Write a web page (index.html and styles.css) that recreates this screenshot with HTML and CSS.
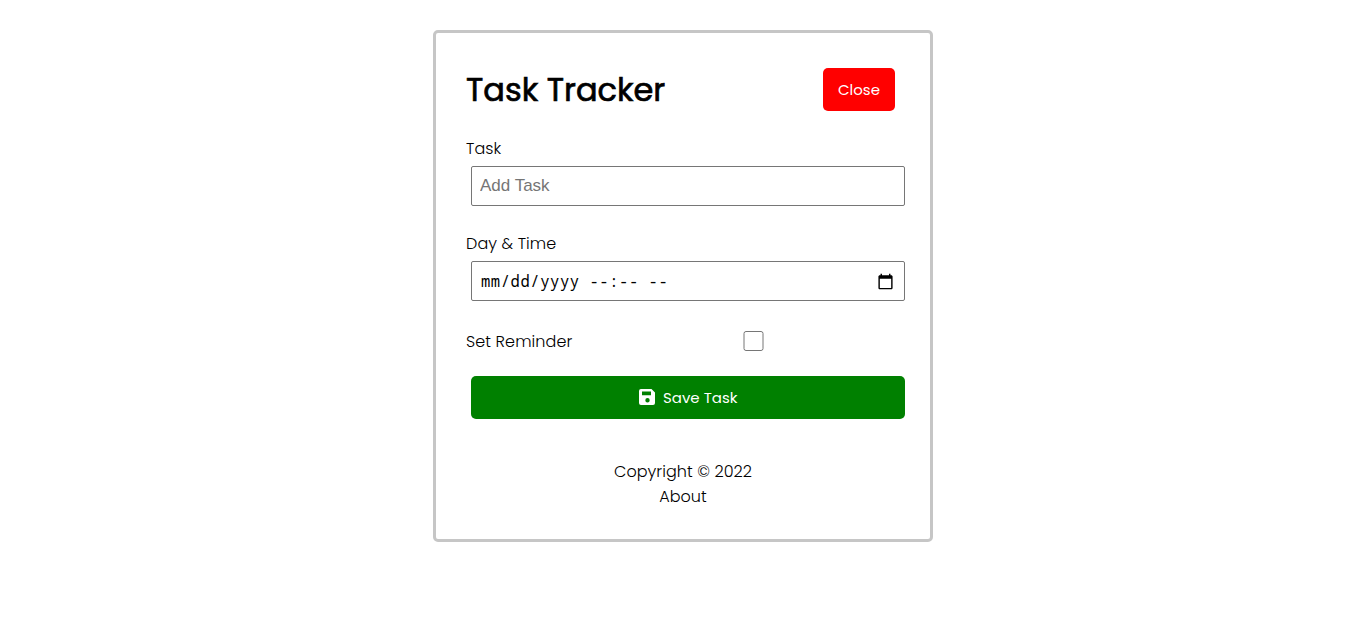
FILE: index.html
```html
<!DOCTYPE html>
<html lang="en">
<head>
<meta charset="utf-8">
<title>Task Tracker</title>
<link rel="stylesheet" href="styles.css">
</head>
<body>
<div class="container">
  <header class="header">
    <h1 class="title">Task Tracker</h1>
    <button class="btn btn-close">Close</button>
  </header>
  <form class="add-form">
    <div class="form-control">
      <label>Task</label>
      <input class="field" type="text" placeholder="Add Task">
    </div>
    <div class="form-control">
      <label>Day &amp; Time</label>
      <div class="field date">
        <span class="date-text">mm/dd/yyyy --:-- --</span>
        <svg class="calendar" viewBox="0 0 24 24"><path d="M20 3h-1V1h-2v2H7V1H5v2H4c-1.100 0-2 .9-2 2v16c0 1.100.9 2 2 2h16c1.100 0 2-.9 2-2V5c0-1.100-.9-2-2-2zm0 18H4V8h16v13z"/></svg>
      </div>
    </div>
    <div class="form-control check">
      <label>Set Reminder</label>
      <input class="checkbox" type="checkbox">
    </div>
    <button type="button" class="btn btn-block">
      <svg class="save" viewBox="0 0 16 16"><path fill-rule="evenodd" d="M2 0H12.500L16 3.500V14a2 2 0 0 1-2 2H2a2 2 0 0 1-2-2V2a2 2 0 0 1 2-2zM3 2.500v3.800h9V2.500zM8.500 9a2.200 2.200 0 1 0 0 4.400A2.200 2.200 0 0 0 8.500 9z"/></svg>
      <span>Save Task</span>
    </button>
  </form>
  <footer class="footer">
    <p>Copyright © 2022</p>
    <a>About</a>
  </footer>
</div>
</body>
</html>
```
FILE: styles.css
```css
* { box-sizing: border-box; margin: 0; padding: 0; }
body { font-family: Poppins, Lato, sans-serif; font-size: 16px; font-weight: 300; color: #000; background: #fff; }
.container { width: 500px; margin: 30px auto; padding: 30px; border: 3px solid #c6c6c6; border-radius: 5px; }
.header { display: flex; justify-content: space-between; align-items: center; margin-bottom: 20px; }
.title { font-size: 32px; font-weight: 400; -webkit-text-stroke: 0.7px #000; }
.btn { display: inline-block; margin: 5px; padding: 10px 15px; border: none; border-radius: 5px; background: green; color: #fff; font-family: inherit; font-size: 15px; font-weight: 400; }
.btn-close { background: red; }
.add-form { margin-bottom: 40px; }
.form-control { display: flow-root; margin: 20px 0; }
.form-control label { display: block; letter-spacing: 0.1px; }
.field { display: block; width: 100%; height: 40px; margin: 5px; padding: 3px 8px; border: 1px solid #767676; border-radius: 2px; background: #fff; font-family: "Liberation Sans", sans-serif; font-size: 17px; font-weight: 400; }
.date { display: flex; align-items: center; justify-content: space-between; padding: 3px 10px 3px 9px; }
.date-text { font-family: "Noto Sans Mono", "DejaVu Sans Mono", monospace; font-size: 15.500px; letter-spacing: 0.560px; white-space: pre; }
.calendar { width: 17px; height: 17px; }
.form-control.check { display: flex; align-items: center; justify-content: space-between; }
.check label { flex: 1; }
.checkbox { flex: 2; height: 20px; margin: 5px; }
.btn-block { display: flex; align-items: center; justify-content: center; gap: 8.500px; width: 100%; }
.save { width: 16px; height: 16px; margin-top: -2px; fill: #fff; }
.footer { text-align: center; letter-spacing: 0.06px; }
.footer a { display: block; }
```
